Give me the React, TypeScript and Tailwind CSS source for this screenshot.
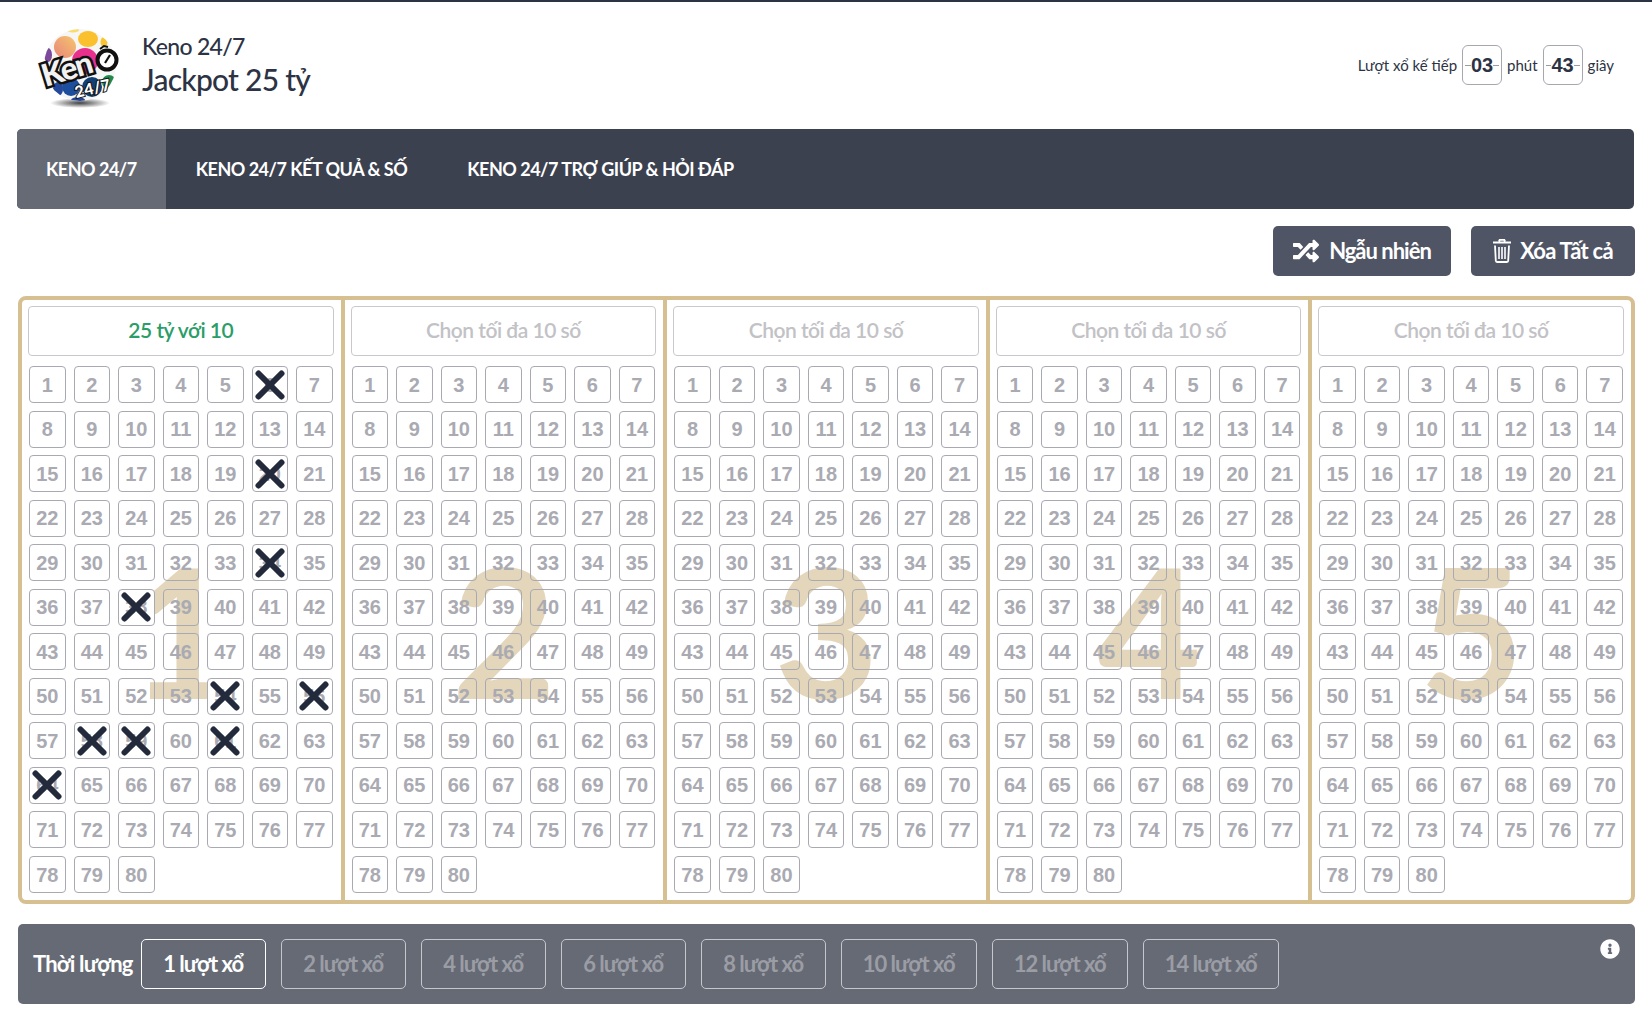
import { FaRandom, FaInfoCircle } from "react-icons/fa";

const LATO = "font-['Lato','Noto_Sans',sans-serif]";
const picks = [6, 20, 34, 38, 54, 56, 58, 59, 61, 64];
const numbers = Array.from({ length: 80 }, (_, i) => i + 1);
const durations = ["1 lượt xổ", "2 lượt xổ", "4 lượt xổ", "6 lượt xổ", "8 lượt xổ", "10 lượt xổ", "12 lượt xổ", "14 lượt xổ"];

function Logo() {
  return (
    <svg width="84" height="84" viewBox="0 0 84 84" className="shrink-0 overflow-visible">
      <defs>
        <radialGradient id="shadow">
          <stop offset="0%" stopColor="#222" stopOpacity="0.85" />
          <stop offset="100%" stopColor="#222" stopOpacity="0" />
        </radialGradient>
        <linearGradient id="peach" x1="0" y1="1" x2="1" y2="0">
          <stop offset="0%" stopColor="#e8857a" />
          <stop offset="100%" stopColor="#f6c66e" />
        </linearGradient>
        <clipPath id="ball"><circle cx="42" cy="38" r="36" /></clipPath>
      </defs>
      <ellipse cx="42" cy="76" rx="30" ry="5" fill="url(#shadow)" />
      <circle cx="42" cy="38" r="36" fill="#f6f6f4" />
      <g clipPath="url(#ball)">
        <circle cx="27" cy="20" r="11" fill="url(#peach)" />
        <ellipse cx="50" cy="12" rx="10" ry="8" fill="#fbc02d" />
        <ellipse cx="66" cy="15" rx="3.5" ry="5" fill="#fbc531" />
        <ellipse cx="35" cy="3" rx="6" ry="2.5" fill="#f9dc6a" />
        <circle cx="47" cy="34" r="13" fill="#e9308c" />
        <ellipse cx="10" cy="28" rx="4" ry="7" fill="#7b4a9c" />
        <circle cx="33" cy="60" r="9" fill="#1d4e9e" />
        <circle cx="54" cy="60" r="10" fill="#123f74" />
        <circle cx="71" cy="55" r="7" fill="#1f8a4c" />
        <ellipse cx="20" cy="62" rx="5" ry="7" fill="#24489b" />
        <ellipse cx="40" cy="73" rx="7" ry="3" fill="#24489b" />
      </g>
      <g transform="rotate(-17 7 58)">
        <text x="7" y="60" fill="#f2f2f2" stroke="#111" strokeWidth="5" paintOrder="stroke" fontFamily="Lato, sans-serif" fontWeight="900" fontSize="31" letterSpacing="-1.5">Ken</text>
      </g>
      <circle cx="69" cy="33" r="9.5" fill="#fff" stroke="#111" strokeWidth="4" />
      <path d="M67 36 L72 28" stroke="#111" strokeWidth="2.2" />
      <path d="M62 22 L66 19 L70 20" stroke="#111" strokeWidth="2" fill="none" />
      <g transform="rotate(-13 50 60)">
        <text x="36" y="68" fill="#fff" stroke="#111" strokeWidth="2" paintOrder="stroke" fontFamily="Lato, sans-serif" fontWeight="900" fontSize="16" letterSpacing="0.2">24/7</text>
      </g>
    </svg>
  );
}

function TrashIcon() {
  return (
    <svg width="18" height="24" viewBox="0 0 18 24" className="shrink-0">
      <path d="M6 2.5 L6.8 .8 H11.2 L12 2.5 M0 3.5 H18" stroke="#fff" strokeWidth="2" fill="none" />
      <path d="M2 6.5 L2.8 21.8 Q2.9 23 4 23 H14 Q15.1 23 15.2 21.8 L16 6.5" stroke="#fff" strokeWidth="1.8" fill="none" />
      <path d="M6 8 V20 M9 8 V20 M12 8 V20" stroke="#fff" strokeWidth="1.6" />
    </svg>
  );
}

function Countdown({ value }: { value: string }) {
  return (
    <div className="relative flex h-10 w-10 items-center justify-center rounded-md border border-[#a6a8ae] bg-white">
      <div className="absolute left-[2px] right-[2px] top-[19px] h-px bg-[#9a9ca3]" />
      <span className="relative bg-white font-['Liberation_Sans',sans-serif] text-[20px] font-bold leading-none text-[#2c3344]">{value}</span>
    </div>
  );
}

function Cell({ n, on }: { n: number; on: boolean }) {
  return (
    <div className={`relative flex h-[37px] items-center justify-center rounded-[4px] border border-[#a9a9b1] font-['Liberation_Sans',sans-serif] text-[20px] font-bold text-[#aaaab2] ${on ? "bg-white" : ""}`}>
      {n}
      {on && (
        <svg viewBox="0 0 30 30" className="absolute left-1/2 top-1/2 h-[30px] w-[30px] -translate-x-1/2 -translate-y-1/2">
          <path d="M3.5 3.5 L26.5 26.5 M26.5 3.5 L3.5 26.5" stroke="#222a3b" strokeWidth="6" strokeLinecap="round" fill="none" />
        </svg>
      )}
    </div>
  );
}

function Board({ index, first }: { index: number; first: boolean }) {
  return (
    <div className={`relative min-w-0 flex-1 pb-[7px] pl-[6px] pr-[7px] pt-[6px] ${index < 5 ? "border-r-4 border-[#d6bf91]" : ""}`}>
      <div className={`absolute left-0 right-0 top-[229px] text-center ${LATO} text-[181px] font-bold leading-[200px] text-[#e3d6bb]`}>{index}</div>
      <div className={`relative flex h-[50px] items-center justify-center rounded-[4px] border border-[#c9c9cd] pb-[2px] ${LATO} text-[21px] font-semibold tracking-[-0.5px] ${first ? "text-[#2a9d68]" : "text-[#c2c2c6]"}`}>
        {first ? "25 tỷ với 10" : "Chọn tối đa 10 số"}
      </div>
      <div className="relative mt-[10px] grid grid-cols-7 gap-x-2 gap-y-[7.55px] px-[1px]">
        {numbers.map((n) => (
          <Cell key={n} n={n} on={first && picks.includes(n)} />
        ))}
      </div>
    </div>
  );
}

export default function App() {
  return (
    <div className={`min-h-[1030px] bg-white ${LATO} text-[#2c3344]`}>
      <div className="h-[2px] bg-[#2c3344]" />
      <div className="px-[17px]">
        <header className="flex h-[127px] items-center justify-between pr-[21px]">
          <div className="flex items-center">
            <div className="ml-[21px] mt-[6px]"><Logo /></div>
            <div className="ml-[20px] mt-[-5px]">
              <div className="text-[23px] font-medium leading-[32px] tracking-[-0.7px]">Keno 24/7</div>
              <div className="mt-[-1px] text-[30px] font-medium leading-[36px] tracking-[-0.75px]">Jackpot 25 tỷ</div>
            </div>
          </div>
          <div className="mt-[-1px] flex items-center gap-[5px] text-[15px]">
            <span>Lượt xổ kế tiếp</span>
            <Countdown value="03" />
            <span>phút</span>
            <Countdown value="43" />
            <span>giây</span>
          </div>
        </header>

        <nav className="mr-px flex h-20 overflow-hidden rounded-[5px] bg-[#3c4150] text-[18px] font-bold tracking-[-0.5px] text-white">
          <a className="flex items-center bg-[#666a75] px-[29px] pt-px">KENO 24/7</a>
          <a className="flex items-center px-[30px] pt-px">KENO 24/7 KẾT QUẢ &amp; SỐ</a>
          <a className="flex items-center px-[30px] pt-px">KENO 24/7 TRỢ GIÚP &amp; HỎI ĐÁP</a>
        </nav>

        <div className="mt-[17px] flex justify-end gap-5">
          <button className="flex h-[50px] w-[178px] items-center justify-center gap-[10px] rounded-[5px] bg-[#4f5565] pb-px text-[22px] font-bold tracking-[-1px] text-white">
            <FaRandom className="text-[26px]" />
            Ngẫu nhiên
          </button>
          <button className="flex h-[50px] w-[164px] items-center justify-center gap-[9px] rounded-[5px] bg-[#4f5565] pb-px text-[22px] font-bold tracking-[-0.75px] text-white">
            <TrashIcon />
            Xóa Tất cả
          </button>
        </div>

        <div className="ml-px mt-5 flex h-[608px] overflow-hidden rounded-lg border-4 border-[#d6bf91]">
          {[1, 2, 3, 4, 5].map((i) => (
            <Board key={i} index={i} first={i === 1} />
          ))}
        </div>

        <div className="relative ml-px mt-[20px] flex h-[80px] gap-[15px] rounded-[5px] bg-[#666a75] pl-[15px] pt-[15px]">
          <div className="mr-[-7px] flex h-[50px] items-center pb-[2px] text-[22px] font-bold tracking-[-0.8px] text-white">Thời lượng</div>
          {durations.map((d, i) => (
            <div
              key={d}
              className={`flex h-[50px] items-center justify-center rounded-[5px] border pb-[2px] text-[22px] font-bold tracking-[-1px] ${i > 4 ? "w-[136px]" : "w-[125px]"} ${i === 0 ? "border-white text-white" : "border-[#c6c7cc] text-[#9b9da5]"}`}
            >
              {d}
            </div>
          ))}
          <FaInfoCircle className="absolute right-[15px] top-[15px] text-[20px] text-white" />
        </div>
      </div>
    </div>
  );
}
